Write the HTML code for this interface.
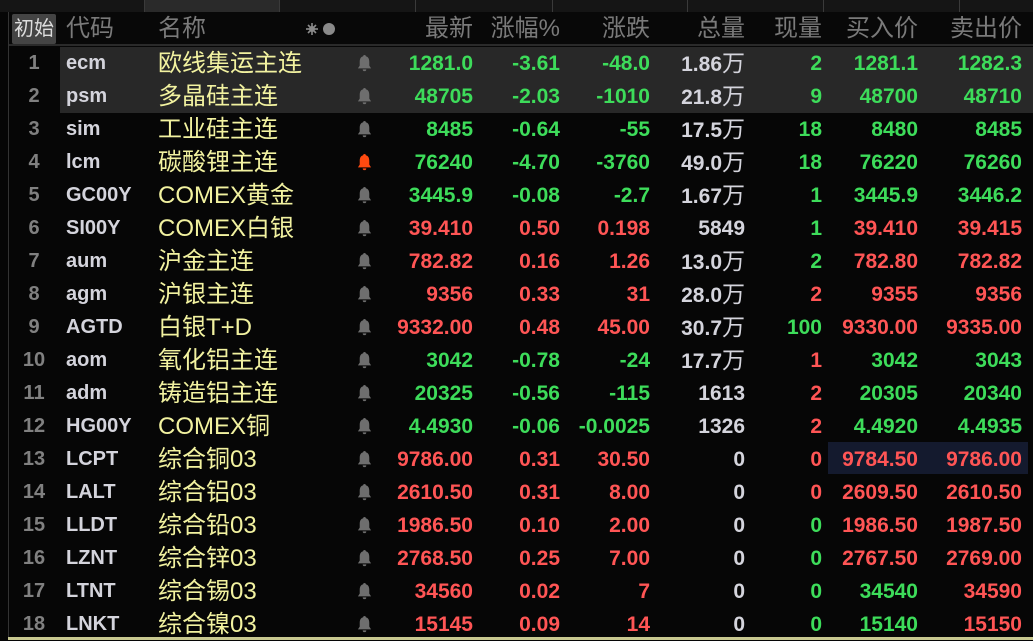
<!DOCTYPE html>
<html><head><meta charset="utf-8">
<style>
*{margin:0;padding:0;box-sizing:border-box}
body{width:1033px;height:640px;background:#060606;overflow:hidden;position:relative;font-family:"Liberation Sans","Noto Sans CJK SC",sans-serif}
.tabs{position:absolute;left:0;top:0;width:1033px;height:12px;background:#151515}
.tab{position:absolute;top:0;height:12px;border-right:1px solid #3a3a3a}
.hdr{position:absolute;left:8px;top:12px;width:1025px;height:34px;background:#080808;border-bottom:2px solid #2a2a2a}
.lb{position:absolute;left:8px;top:12px;width:1px;height:628px;background:#333}
.c{position:absolute;white-space:nowrap;line-height:33px;height:33px}
.h{color:#7a7a7a;font-size:24px;line-height:34px;top:12px;position:absolute;white-space:nowrap}
.r{text-align:right}
.n{font-weight:bold;font-size:21px}
.g{color:#3ddc5a}.d{color:#ff5555}.w{color:#d4d4dc}
.nm{color:#f2f2a0;font-size:24px}
.idx{color:#808080;font-size:20px;font-weight:bold;text-align:center;width:50px;left:9px}
.code{color:#d4d4dc;font-size:20px;font-weight:bold;left:66px}
.wan{font-weight:normal;font-size:23px}
</style></head><body>
<div class="tabs">
<div class="tab" style="left:0;width:145px"></div>
<div class="tab" style="left:145px;width:135px;background:#2a2a2a"></div>
<div class="tab" style="left:280px;width:136px"></div>
<div class="tab" style="left:416px;width:137px"></div>
<div class="tab" style="left:553px;width:135px"></div>
<div class="tab" style="left:688px;width:136px"></div>
<div class="tab" style="left:824px;width:136px"></div>
</div>
<div class="hdr"></div>
<div style="position:absolute;left:60px;top:47px;width:973px;height:66px;background:#282828"></div>
<div style="position:absolute;left:828px;top:442px;width:200px;height:32px;background:#141a2e"></div>
<div class="lb"></div>
<div style="position:absolute;left:8px;top:637px;width:1025px;height:3px;background:#c8c890"></div>
<div style="position:absolute;left:12px;top:14px;width:44px;height:30px;background:#444;border-radius:2px;color:#ddd;font-size:20px;line-height:30px;text-align:center">初始</div>
<div class="h" style="left:66px">代码</div>
<div class="h" style="left:158px">名称</div>
<svg style="position:absolute;left:306px;top:22px" width="32" height="14" viewBox="0 0 32 14"><g stroke="#8a8a8a" stroke-width="1.6"><line x1="6" y1="1" x2="6" y2="13"/><line x1="0" y1="7" x2="12" y2="7"/><line x1="2" y1="3" x2="10" y2="11"/><line x1="10" y1="3" x2="2" y2="11"/></g><circle cx="6" cy="7" r="3" fill="#8a8a8a"/><circle cx="23" cy="7" r="6" fill="#8a8a8a"/></svg>
<div class="h r" style="right:560px">最新</div>
<div class="h r" style="right:473px">涨幅%</div>
<div class="h r" style="right:383px">涨跌</div>
<div class="h r" style="right:288px">总量</div>
<div class="h r" style="right:211px">现量</div>
<div class="h r" style="right:115px">买入价</div>
<div class="h r" style="right:11px">卖出价</div>
<div id="rows"></div>
<script>
var D=[
["ecm","欧线集运主连","g","1281.0","-3.61","-48.0","1.86","万","g","2","g","1281.1","g","1282.3"],
["psm","多晶硅主连","g","48705","-2.03","-1010","21.8","万","g","9","g","48700","g","48710"],
["sim","工业硅主连","g","8485","-0.64","-55","17.5","万","g","18","g","8480","g","8485"],
["lcm","碳酸锂主连","g","76240","-4.70","-3760","49.0","万","g","18","g","76220","g","76260"],
["GC00Y","COMEX黄金","g","3445.9","-0.08","-2.7","1.67","万","g","1","g","3445.9","g","3446.2"],
["SI00Y","COMEX白银","d","39.410","0.50","0.198","5849","","g","1","d","39.410","d","39.415"],
["aum","沪金主连","d","782.82","0.16","1.26","13.0","万","g","2","d","782.80","d","782.82"],
["agm","沪银主连","d","9356","0.33","31","28.0","万","d","2","d","9355","d","9356"],
["AGTD","白银T+D","d","9332.00","0.48","45.00","30.7","万","g","100","d","9330.00","d","9335.00"],
["aom","氧化铝主连","g","3042","-0.78","-24","17.7","万","d","1","g","3042","g","3043"],
["adm","铸造铝主连","g","20325","-0.56","-115","1613","","d","2","g","20305","g","20340"],
["HG00Y","COMEX铜","g","4.4930","-0.06","-0.0025","1326","","d","2","g","4.4920","g","4.4935"],
["LCPT","综合铜03","d","9786.00","0.31","30.50","0","","d","0","d","9784.50","d","9786.00"],
["LALT","综合铝03","d","2610.50","0.31","8.00","0","","d","0","d","2609.50","d","2610.50"],
["LLDT","综合铅03","d","1986.50","0.10","2.00","0","","g","0","d","1986.50","d","1987.50"],
["LZNT","综合锌03","d","2768.50","0.25","7.00","0","","g","0","d","2767.50","d","2769.00"],
["LTNT","综合锡03","d","34560","0.02","7","0","","g","0","g","34540","d","34590"],
["LNKT","综合镍03","d","15145","0.09","14","0","","g","0","g","15140","d","15150"]];
var h="";
D.forEach(function(r,i){
var t=47+i*33;
var bell=i==3?"#ff4a10":"#6e6e6e";
h+='<div class="c idx" style="top:'+t+'px">'+(i+1)+'</div>';
h+='<div class="c code" style="top:'+t+'px">'+r[0]+'</div>';
h+='<div class="c nm" style="top:'+t+'px;left:158px">'+r[1]+'</div>';
h+='<svg style="position:absolute;left:356px;top:'+(t+6)+'px" width="17" height="20" viewBox="0 0 16 18"><path d="M8 1.5c-.8 0-1.3.6-1.3 1.2C4.3 3.4 3.5 5.4 3.5 8v3.5L1.8 14h12.4l-1.7-2.5V8c0-2.6-.8-4.6-3.2-5.3 0-.6-.5-1.2-1.3-1.2zM6.3 15a1.7 1.7 0 003.4 0z" fill="'+bell+'"/></svg>';
h+='<div class="c n r '+r[2]+'" style="top:'+t+'px;right:560px">'+r[3]+'</div>';
h+='<div class="c n r '+r[2]+'" style="top:'+t+'px;right:473px">'+r[4]+'</div>';
h+='<div class="c n r '+r[2]+'" style="top:'+t+'px;right:383px">'+r[5]+'</div>';
h+='<div class="c n r w" style="top:'+t+'px;right:288px">'+r[6]+(r[7]?'<span class="wan">'+r[7]+'</span>':'')+'</div>';
h+='<div class="c n r '+r[8]+'" style="top:'+t+'px;right:211px">'+r[9]+'</div>';
h+='<div class="c n r '+r[10]+'" style="top:'+t+'px;right:115px">'+r[11]+'</div>';
h+='<div class="c n r '+r[12]+'" style="top:'+t+'px;right:11px">'+r[13]+'</div>';
});
document.getElementById("rows").innerHTML=h;
</script>
</body></html>
